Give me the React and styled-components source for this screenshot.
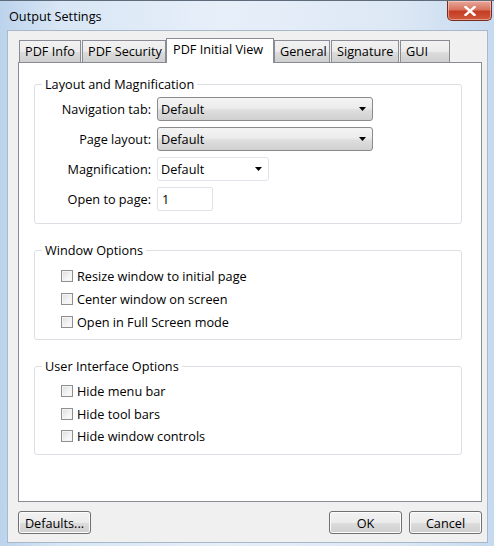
import React from "react";
import styled, { createGlobalStyle, css } from "styled-components";

const GlobalStyle = createGlobalStyle`
  html, body {
    margin: 0;
    padding: 0;
    background: #ffffff;
  }
  body {
    font-family: "Open Sans", "Noto Sans", "DejaVu Sans", sans-serif;
    font-size: 12.7px;
    color: #000000;
  }
`;

const UI_FONT = `"Open Sans", "Noto Sans", "DejaVu Sans", sans-serif`;

const Window = styled.div`
  width: 494px;
  height: 546px;
  display: flex;
  flex-direction: column;
  box-sizing: border-box;
  background: linear-gradient(
    to right,
    #bcd3ec 0%,
    #d8e6f5 12%,
    #e7eff9 45%,
    #dde8f5 80%,
    #c6daef 100%
  );
  border-top: 1px solid #5e6b7a;
  font-family: ${UI_FONT};
  font-size: 12.7px;
`;

const TitleBar = styled.div`
  height: 29px;
  display: flex;
  align-items: flex-start;
  flex-shrink: 0;
`;

const Title = styled.div`
  padding: 7px 0 0 9px;
  line-height: 16px;
  color: #000;
  flex: 1;
`;

const CloseButton = styled.div`
  width: 45px;
  height: 20px;
  margin-right: 2px;
  border: 1px solid #7b2a1e;
  border-top: none;
  border-radius: 0 0 5px 5px;
  box-sizing: border-box;
  background: linear-gradient(
    to bottom,
    #e7a99c 0%,
    #d8735f 45%,
    #c43d24 55%,
    #cf5a3c 100%
  );
  display: flex;
  align-items: center;
  justify-content: center;
  box-shadow: inset 0 0 0 1px rgba(255, 220, 210, 0.5);
`;

const Client = styled.div`
  flex: 1;
  margin: 0 6px 3px 7px;
  background: #f0f0f0;
  border: 1px solid #a9b8c9;
  box-sizing: border-box;
  padding: 7px 5px 8px 10px;
  display: flex;
  flex-direction: column;
`;

const TabStrip = styled.div`
  display: flex;
  align-items: flex-end;
  height: 25px;
  margin-bottom: -1px;
  padding-left: 1px;
  position: relative;
  z-index: 1;
`;

const Tab = styled.div`
  box-sizing: border-box;
  width: ${(p) => p.$w}px;
  margin-right: 1px;
  border: 1px solid #898c95;
  border-bottom: none;
  padding-left: 5px;
  white-space: nowrap;
  ${(p) =>
    p.$active
      ? css`
          height: 25px;
          background: #ffffff;
          line-height: 21px;
          margin-left: -1px;
          margin-right: 0;
          padding-left: 6px;
        `
      : css`
          height: 22px;
          margin-bottom: 1px;
          line-height: 21px;
          background: linear-gradient(
            to bottom,
            #f2f2f2 0%,
            #ebebeb 50%,
            #dddddd 51%,
            #cfcfcf 100%
          );
        `}
`;

const Panel = styled.div`
  flex: 1;
  background: #ffffff;
  border: 1px solid #898c95;
  padding: 13px 19px 0 15px;
  display: flex;
  flex-direction: column;
`;

const Group = styled.fieldset`
  margin: 0 0 ${(p) => p.$gap || 0}px 0;
  padding: 0;
  min-width: 0;
  border: 1px solid #dcdfe3;
  border-radius: 3px;
`;

const Legend = styled.legend`
  margin-left: 7px;
  padding: 0 3px;
  line-height: 16px;
  color: #000;
`;

const FieldGrid = styled.div`
  display: grid;
  grid-template-columns: 116px auto;
  column-gap: 6px;
  row-gap: 6px;
  padding: 5px 0 12px 0;
  align-items: center;
  justify-items: start;
`;

const Label = styled.label`
  justify-self: end;
  line-height: 16px;
`;

const SelectBox = styled.div`
  box-sizing: border-box;
  width: ${(p) => p.$w}px;
  height: 24px;
  display: flex;
  align-items: center;
  padding: 0 6px 0 3px;
  border-radius: 3px;
  ${(p) =>
    p.$editable
      ? css`
          background: #ffffff;
          border: 1px solid #e2e3ea;
        `
      : css`
          border: 1px solid #8b8b8b;
          background: linear-gradient(
            to bottom,
            #f4f4f4 0%,
            #ececec 45%,
            #dedede 55%,
            #d0d0d0 100%
          );
        `}
`;

const SelectText = styled.span`
  flex: 1;
  line-height: 16px;
`;

const TextInput = styled.div`
  box-sizing: border-box;
  width: 56px;
  height: 24px;
  border: 1px solid #e0e2e8;
  border-radius: 2px;
  background: #fff;
  padding: 0 4px;
  line-height: 22px;
`;

const CheckList = styled.div`
  display: flex;
  flex-direction: column;
  padding: 6px 0 6px 26px;
`;

const CheckRow = styled.label`
  display: flex;
  align-items: center;
  height: ${(p) => p.$h}px;
  gap: 4px;
`;

const CheckBox = styled.span`
  width: 12px;
  height: 12px;
  box-sizing: border-box;
  border: 1px solid #8f8f8f;
  background: linear-gradient(135deg, #dcdcdc 0%, #f4f4f4 60%, #fdfdfd 100%);
  box-shadow: inset 0 0 0 1px #f4f4f4;
  flex-shrink: 0;
`;

const ButtonRow = styled.div`
  display: flex;
  align-items: center;
  gap: 7px;
  padding-top: 9px;
`;

const Button = styled.button`
  box-sizing: border-box;
  width: 73px;
  height: 23px;
  font-family: ${UI_FONT};
  font-size: 12.7px;
  color: #000;
  border: 1px solid #707070;
  border-radius: 3px;
  background: linear-gradient(
    to bottom,
    #f2f2f2 0%,
    #ebebeb 50%,
    #dddddd 51%,
    #cfcfcf 100%
  );
  box-shadow: inset 0 0 0 1px #fcfcfc;
  padding: 0;
  ${(p) => p.$push && "margin-left: auto;"}
`;

const Arrow = () => (
  <svg width="7" height="4" viewBox="0 0 7 4">
    <path d="M0 0 H7 L3.5 4 Z" fill="#000" />
  </svg>
);

const CloseGlyph = () => (
  <svg width="12" height="10" viewBox="0 0 12 10">
    <path
      d="M1.5 1 L10.5 9 M10.5 1 L1.5 9"
      stroke="#ffffff"
      strokeWidth="2.4"
      strokeLinecap="square"
    />
  </svg>
);

const tabs = [
  { label: "PDF Info", w: 62 },
  { label: "PDF Security", w: 84 },
  { label: "PDF Initial View", w: 108, active: true },
  { label: "General", w: 56 },
  { label: "Signature", w: 68 },
  { label: "GUI", w: 50 },
];

const windowOptions = [
  "Resize window to initial page",
  "Center window on screen",
  "Open in Full Screen mode",
];

const uiOptions = ["Hide menu bar", "Hide tool bars", "Hide window controls"];

export default function App() {
  return (
    <>
      <GlobalStyle />
      <Window>
        <TitleBar>
          <Title>Output Settings</Title>
          <CloseButton>
            <CloseGlyph />
          </CloseButton>
        </TitleBar>
        <Client>
          <TabStrip>
            {tabs.map((t) => (
              <Tab key={t.label} $w={t.w} $active={t.active}>
                {t.label}
              </Tab>
            ))}
          </TabStrip>
          <Panel>
            <Group $gap={18}>
              <Legend>Layout and Magnification</Legend>
              <FieldGrid>
                <Label>Navigation tab:</Label>
                <SelectBox $w={216}>
                  <SelectText>Default</SelectText>
                  <Arrow />
                </SelectBox>
                <Label>Page layout:</Label>
                <SelectBox $w={216}>
                  <SelectText>Default</SelectText>
                  <Arrow />
                </SelectBox>
                <Label>Magnification:</Label>
                <SelectBox $w={112} $editable>
                  <SelectText>Default</SelectText>
                  <Arrow />
                </SelectBox>
                <Label>Open to page:</Label>
                <TextInput>1</TextInput>
              </FieldGrid>
            </Group>
            <Group $gap={18}>
              <Legend>Window Options</Legend>
              <CheckList>
                {windowOptions.map((o) => (
                  <CheckRow key={o} $h={23}>
                    <CheckBox />
                    {o}
                  </CheckRow>
                ))}
              </CheckList>
            </Group>
            <Group>
              <Legend>User Interface Options</Legend>
              <CheckList>
                {uiOptions.map((o) => (
                  <CheckRow key={o} $h={22.5}>
                    <CheckBox />
                    {o}
                  </CheckRow>
                ))}
              </CheckList>
            </Group>
          </Panel>
          <ButtonRow>
            <Button>Defaults...</Button>
            <Button $push>OK</Button>
            <Button>Cancel</Button>
          </ButtonRow>
        </Client>
      </Window>
    </>
  );
}
